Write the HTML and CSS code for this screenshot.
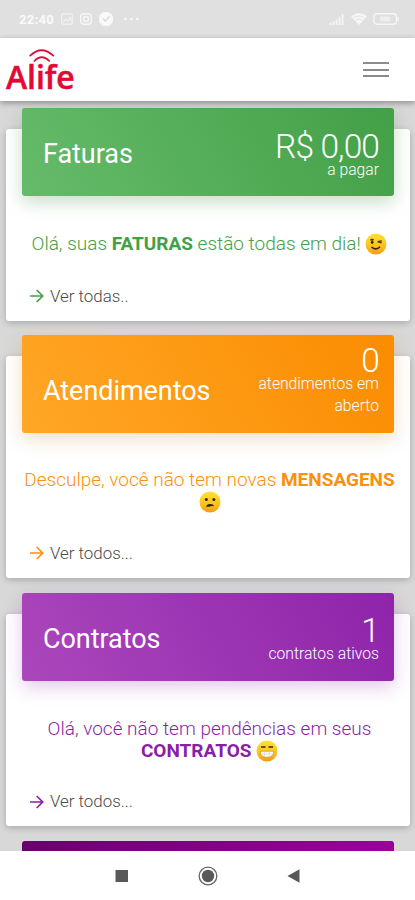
FILE: index.html
```html
<!DOCTYPE html>
<html lang="pt-BR">
<head>
<meta charset="utf-8">
<meta name="viewport" content="width=device-width, initial-scale=1">
<title>Alife</title>
<link rel="stylesheet" href="styles.css">
</head>
<body>
<div class="screen">
  <div class="status">
    <span class="clock">22:40</span>
    <svg class="s-img" width="12" height="12" viewBox="0 0 12 12"><rect x=".7" y=".7" width="10.6" height="10.6" rx="1.5"/><path d="M2 9l3-3 2 2 2-3 2 4"/></svg>
    <svg class="s-insta" width="12" height="12" viewBox="0 0 12 12"><rect x=".7" y=".7" width="10.6" height="10.6" rx="3"/><circle cx="6" cy="6" r="2.5"/><path d="M9 2.9h.4"/></svg>
    <svg class="s-check" width="14" height="14" viewBox="0 0 14 14"><circle cx="7" cy="7" r="6.6" fill="#fafafa"/><path d="M4 6.5l2.3 2.8L10.500 4" stroke="#dedede"/></svg>
    <span class="dots"><i></i><i></i><i></i></span>
    <svg class="s-signal" width="15" height="11" viewBox="0 0 15 11"><path d="M1.500 9v2M4.500 7.500v3.500M7.500 5.500v5.500M10.500 3v8M13.500 0v11"/></svg>
    <svg class="s-wifi" width="16" height="12" viewBox="0 0 16 12"><path d="M0 3.500Q8-3 16 3.500L8 12z" fill="#f6f6f6" stroke="none"/><path d="M2.500 5Q8 1 13.500 5M4.500 7.300Q8 4.500 11.500 7.300" stroke="#e0e0e0" stroke-width=".8"/></svg>
    <svg class="s-batt" width="26" height="12" viewBox="0 0 26 12"><rect x=".8" y=".8" width="22.600" height="10.400" rx="3.200"/><path d="M25 4v4"/><rect x="7" y="3.500" width="10" height="5" rx="1" fill="#eee" stroke="none"/></svg>
  </div>
  <header class="topbar">
    <div class="logo">
      <svg class="waves" width="26" height="14" viewBox="0 0 26 14"><path d="M1.200 6.700Q12.500-4.200 24.300 6.700"/><path d="M5.300 12Q12.700 4.300 20.300 12"/></svg>
      <span class="brand">Alife</span>
    </div>
    <div class="burger"><i></i><i></i><i></i></div>
  </header>
  <main class="list">
    <section class="card green">
      <div class="head"><h2>Faturas</h2><div class="stat"><b>R$ 0,00</b><small>a pagar</small></div></div>
      <p class="msg">Olá, suas <strong>FATURAS</strong> estão todas em dia! <svg class="emoji" viewBox="0 0 22 22"><use href="#face"/><path d="M5.300 7.300q2-1.500 3.300 0M12.600 8.600l4.200-.8M12.600 8.600l4 1.300" fill="none" stroke="#453018" stroke-width="1.300"/><ellipse cx="7.200" cy="9.200" rx="1.300" ry="1.700" fill="#35240f"/><path d="M6.500 14q4.600 4 8.500-.2" fill="none" stroke="#35240f" stroke-width="1.600"/></svg></p>
      <a class="more"><svg class="arrow" viewBox="0 0 14 14"><path d="M0 7h12.500M6.700 1l6 6-6 6"/></svg><span>Ver todas..</span></a>
    </section>
    <section class="card orange">
      <div class="head"><h2>Atendimentos</h2><div class="stat"><b>0</b><small>atendimentos em aberto</small></div></div>
      <p class="msg">Desculpe, você não tem novas <strong>MENSAGENS</strong> <svg class="emoji" viewBox="0 0 22 22"><use href="#face"/><circle cx="7.300" cy="8.600" r="1.500" fill="#35240f"/><circle cx="14.900" cy="8.600" r="1.500" fill="#35240f"/><path d="M7 15.800q.6-2.800 4-2.900t4.200 2.300q-2-.6-3.600.1t-4.600.5" fill="#35240f"/></svg></p>
      <a class="more"><svg class="arrow" viewBox="0 0 14 14"><path d="M0 7h12.500M6.700 1l6 6-6 6"/></svg><span>Ver todos...</span></a>
    </section>
    <section class="card purple">
      <div class="head"><h2>Contratos</h2><div class="stat"><b>1</b><small>contratos ativos</small></div></div>
      <p class="msg">Olá, você não tem pendências em seus <strong>CONTRATOS</strong> <svg class="emoji" viewBox="0 0 22 22"><use href="#face"/><path d="M5 7h4.500M12.500 7h4.500" fill="none" stroke="#35240f" stroke-width="1.500"/><path d="M4.300 11.300h13.400q0 6-6.700 6t-6.700-6z" fill="#fff" stroke="#b88932" stroke-width=".6"/><path d="M4.800 14h12.400M8.500 11.500v5M13.500 11.500v5" stroke="#d5cdbb" stroke-width=".6"/></svg></p>
      <a class="more"><svg class="arrow" viewBox="0 0 14 14"><path d="M0 7h12.500M6.700 1l6 6-6 6"/></svg><span>Ver todos...</span></a>
    </section>
    <section class="card plum"><div class="head"></div></section>
  </main>
  <nav class="nav">
    <svg width="14" height="14" viewBox="0 0 14 14"><path d="M.5 1h12.500v12H.5z" fill="#585858"/></svg>
    <svg width="20" height="20" viewBox="0 0 20 20"><circle cx="10" cy="10" r="8.800" fill="none" stroke="#666" stroke-width="1.300"/><circle cx="10" cy="10" r="6.200" fill="#585858"/></svg>
    <svg width="14" height="14" viewBox="0 0 14 14"><path d="M.5 7L12.500.3v13.400z" fill="#585858"/></svg>
  </nav>
</div>
<svg class="defs" width="0" height="0"><defs>
  <linearGradient id="skin" x1="0" y1="0" x2="0" y2="1"><stop offset="0" stop-color="#ffe238"/><stop offset=".6" stop-color="#fcc21b"/><stop offset="1" stop-color="#ee9a1c"/></linearGradient>
  <circle id="face" cx="11" cy="11" r="10.500" fill="url(#skin)"/>
</defs></svg>
</body>
</html>
```
FILE: styles.css
```css
* { box-sizing: border-box; }
body { margin: 0; font-family: Roboto, "Liberation Sans", sans-serif; font-weight: 300; background: #d8d8d8; }
svg { flex: none; }
.defs { display: block; }
.screen { width: 415px; height: 900px; display: flex; flex-direction: column; overflow: hidden; }

.status { flex: none; height: 38px; padding: 0 16px 0 19px; display: flex; align-items: center; background: #e0e0e0; }
.status svg { fill: none; stroke: #f6f6f6; stroke-width: 1.4; }
.clock { width: 36px; color: #fafafa; font-size: 13px; font-weight: 700; letter-spacing: .3px; }
.s-img { margin-left: 6px; opacity: .7; }
.s-insta { margin-left: 7px; }
.s-check { margin-left: 7px; }
.dots { display: flex; gap: 3px; margin-left: 11px; margin-right: auto; }
.dots i { width: 3px; height: 2px; border-radius: 1px; background: #f6f6f6; }
.status .s-signal { stroke-width: 1.8; }
.s-wifi { margin-left: 7px; }
.s-batt { margin-left: 6px; }

.topbar { flex: none; position: relative; height: 62.500px; padding: 0 26px 0 6px; display: flex; justify-content: space-between; background: #fff; box-shadow: 0 2px 6px rgba(0,0,0,.34); }
.logo { display: flex; flex-direction: column; padding-top: 11px; color: #e20a35; }
.waves { margin-left: 23px; fill: none; stroke: #e20a35; stroke-width: 1.7; stroke-linecap: round; }
.brand { font-family: "Open Sans", "Noto Sans", sans-serif; font-size: 32px; font-weight: 600; line-height: 27px; letter-spacing: -.1px; -webkit-text-stroke: .5px #e20a35; }
.burger { display: flex; flex-direction: column; gap: 4.500px; padding-top: 24px; }
.burger i { width: 26px; height: 2px; background: #8b8b8b; }

.list { flex: 1; min-height: 0; overflow: hidden; padding: 28.500px 5px 0 6px; background: #d8d8d8; }
.card { height: 191.500px; margin-bottom: 35px; padding: 0 16px; display: flex; flex-direction: column; border-radius: 3px; background: #fff; box-shadow: 0 2px 7px rgba(0,0,0,.22); }
.head { flex: none; height: 88px; margin-top: -21px; padding: 0 15px 0 21px; display: flex; align-items: center; justify-content: space-between; border-radius: 3px; color: #fff; }
.head h2 { margin: 4px 0 0; font-size: 27px; font-weight: 400; line-height: 32px; letter-spacing: -.050px; }
.stat { width: 150px; margin-top: 11px; text-align: right; }
.stat b { display: block; font-size: 33.500px; font-weight: 300; line-height: 24px; letter-spacing: -.900px; }
.stat small { display: block; font-size: 15.700px; line-height: 22px; }
.msg { margin: 37px -5px 0 -2px; text-align: center; font-size: 19px; line-height: 22px; }
.msg strong { font-weight: 700; }
.emoji { width: 22px; height: 22px; vertical-align: -5px; }
.more { display: flex; align-items: center; gap: 6px; margin: auto 0 14px 8px; color: #4a4a4a; font-size: 16.900px; line-height: 21px; }
.arrow { width: 14px; height: 14px; fill: none; stroke: currentColor; stroke-width: 1.7; }

.green .head { background: linear-gradient(60deg, #66bb6a, #43a047); box-shadow: 0 6px 18px rgba(56,132,60,.28); }
.green .msg, .green .arrow { color: #43a047; }
.orange { height: 222px; margin-bottom: 36.500px; }
.orange .head { height: 98px; background: linear-gradient(60deg, #ffa726, #fb8c00); box-shadow: 0 6px 18px rgba(200,125,30,.25); }
.orange .head h2 { margin-top: 14px; }
.orange .stat { margin-top: -1px; }
.orange .msg { margin-top: 36px; }
.orange .msg, .orange .arrow { color: #fb9010; }
.purple { height: 212px; margin-bottom: 36px; }
.purple .head { background: linear-gradient(60deg, #ab47bc, #8e24aa); box-shadow: 0 6px 18px rgba(142,36,170,.25); }
.purple .stat { margin-top: 10px; }
.purple .msg { margin-top: 36.500px; }
.purple .msg, .purple .arrow { color: #8b1fa3; }
.plum .head { background: linear-gradient(60deg, #610066, #9a009a); }

.nav { position: relative; flex: none; height: 49px; display: flex; align-items: center; justify-content: center; gap: 69px; background: #fff; }
```
